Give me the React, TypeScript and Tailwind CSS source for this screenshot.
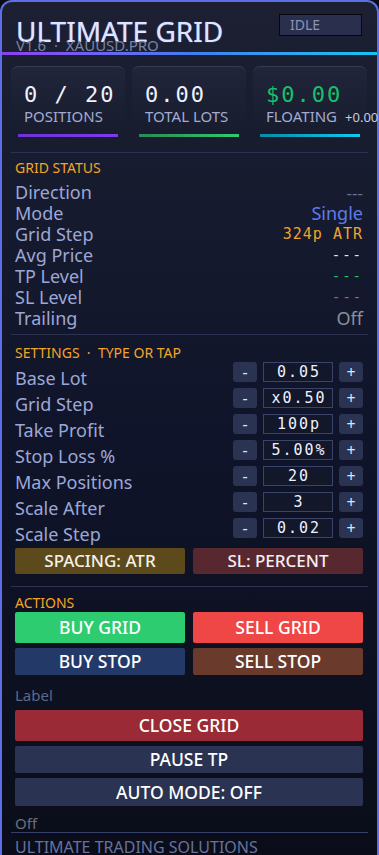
import React from "react";

const statusRows: { label: string; value: React.ReactNode }[] = [
  { label: "Direction", value: <span className="text-[17px] text-[#69718f]">---</span> },
  { label: "Mode", value: <span className="text-[#5f7ae9]">Single</span> },
  {
    label: "Grid Step",
    value: (
      <span className="font-['DejaVu_Sans_Mono',monospace] text-[15px] tracking-[1px] text-[#f0a328]">
        324p ATR
      </span>
    ),
  },
  {
    label: "Avg Price",
    value: <span className="font-['DejaVu_Sans_Mono',monospace] text-[14px] tracking-[2px] text-[#e4e8f5]">---</span>,
  },
  {
    label: "TP Level",
    value: <span className="font-['DejaVu_Sans_Mono',monospace] text-[14px] tracking-[2px] text-[#22c55e]">---</span>,
  },
  {
    label: "SL Level",
    value: <span className="font-['DejaVu_Sans_Mono',monospace] text-[14px] tracking-[2px] text-[#f04444]">---</span>,
  },
  { label: "Trailing", value: <span className="text-[#8b8f99]">Off</span> },
];

const settings = [
  { label: "Base Lot", value: "0.05" },
  { label: "Grid Step", value: "x0.50" },
  { label: "Take Profit", value: "100p" },
  { label: "Stop Loss %", value: "5.00%" },
  { label: "Max Positions", value: "20" },
  { label: "Scale After", value: "3" },
  { label: "Scale Step", value: "0.02" },
];

function StatCard({
  value,
  label,
  extra,
  valueClass,
  barClass,
}: {
  value: string;
  label: string;
  extra?: string;
  valueClass: string;
  barClass: string;
}) {
  return (
    <div className="flex h-[72px] w-[114px] flex-col rounded-[7px] border-t border-[#363c58] bg-gradient-to-b from-[#20253a] to-[#171b2d]">
      <div className="pl-[13px] pt-[17px]">
        <div className={`font-['DejaVu_Sans_Mono',monospace] text-[22px] leading-[22px] tracking-[2px] ${valueClass}`}>
          {value}
        </div>
        <div className="mt-[3px] whitespace-nowrap text-[15px] leading-[15px] text-[#a3acd0]">
          {label}
          {extra && <span className="ml-[8px] text-[13px] text-[#c6cbe3]">{extra}</span>}
        </div>
      </div>
      <div className={`mx-[7px] mb-[1px] mt-auto h-[3px] ${barClass}`} />
    </div>
  );
}

export default function App() {
  return (
    <div className="min-h-screen w-[379px] bg-[#0a0c16] font-['Noto_Sans',sans-serif]">
      <div className="w-[379px] rounded-[12px] border-2 border-[#5d6fe6] bg-gradient-to-b from-[#1c2032] via-[#10142a] to-[#0a0d18] pb-[20px]">
        {/* Header */}
        <div className="flex h-[50px] items-start justify-between overflow-hidden pl-[14px] pr-[15px] pt-[12px]">
          <div className="mt-[3px]">
            <div className="text-[28px] leading-[28px] text-[#dfe4ff] [text-shadow:0_0_1px_#8ea0ff]">ULTIMATE GRID</div>
            <div className="mt-[-7px] whitespace-pre text-[15px] leading-[15px] text-[#7a83a3]">V1.6  ·  XAUUSD.PRO</div>
          </div>
          <div className="h-[22px] w-[83px] border border-[#07080f] bg-[#2a2f4e] pl-[10px] text-[14px] leading-[20px] text-[#8c93b5]">
            IDLE
          </div>
        </div>
        <div className="h-[3px] bg-gradient-to-r from-[#8a3ff0] via-[#3f7cf0] to-[#10c4f0]" />

        {/* Stats */}
        <div className="mt-[11px] flex gap-[7px] pl-[9px]">
          <StatCard value="0 / 20" label="POSITIONS" valueClass="text-[#eef1ff]" barClass="bg-gradient-to-r from-[#6d32d8] to-[#7c3aed]" />
          <StatCard value="0.00" label="TOTAL LOTS" valueClass="text-[#eef1ff]" barClass="bg-gradient-to-r from-[#2a8a55] to-[#2ecc71]" />
          <StatCard
            value="$0.00"
            label="FLOATING"
            extra="+0.005"
            valueClass="text-[#19c06a]"
            barClass="bg-gradient-to-r from-[#0a8aa8] to-[#10c8f0]"
          />
        </div>

        <div className="mx-[9px] mt-[14px] h-px bg-[#2c3350]" />

        {/* Grid status */}
        <div className="pl-[13px] pr-[14px]">
          <div className="mt-[7px] text-[14px] leading-[16px] text-[#f5a524]">GRID STATUS</div>
          <div className="mt-[6px]">
            {statusRows.map((r) => (
              <div key={r.label} className="flex h-[21px] items-center justify-between text-[18px] leading-[21px]">
                <span className="text-[#9ca7d6]">{r.label}</span>
                {r.value}
              </div>
            ))}
          </div>
        </div>

        <div className="mx-[9px] mt-[5px] h-px bg-[#2c3350]" />

        {/* Settings */}
        <div className="pl-[13px] pr-[14px]">
          <div className="mt-[10px] whitespace-pre text-[14px] leading-[16px] text-[#f5a524]">SETTINGS  ·  TYPE OR TAP</div>
          <div className="mt-[1px]">
            {settings.map((s) => (
              <div key={s.label} className="flex h-[26px] items-start justify-between">
                <span className="pt-[6px] text-[18px] leading-[20px] text-[#9ca7d6]">{s.label}</span>
                <div className="flex gap-[6px]">
                  <div className="flex h-[20px] w-[24px] items-center justify-center rounded-[3px] bg-[#2b3352] text-[16px] leading-none text-[#dde3ff]">
                    -
                  </div>
                  <div className="flex h-[20px] w-[70px] items-center justify-center border border-[#3a4468] bg-[#121729] pl-[2px] font-['DejaVu_Sans_Mono',monospace] text-[15px] leading-none tracking-[2px] text-[#eef1ff]">
                    {s.value}
                  </div>
                  <div className="flex h-[20px] w-[24px] items-center justify-center rounded-[3px] bg-[#2b3352] text-[16px] leading-none text-[#dde3ff]">
                    +
                  </div>
                </div>
              </div>
            ))}
          </div>
          <div className="mt-[4px] grid grid-cols-2 gap-[8px]">
            <div className="flex h-[26px] items-center justify-center rounded-[2px] bg-[#5c4a1c] text-[17px] font-medium text-[#f4f1e8]">
              SPACING: ATR
            </div>
            <div className="flex h-[26px] items-center justify-center rounded-[2px] bg-[#582831] text-[17px] font-medium text-[#f6eef0]">
              SL: PERCENT
            </div>
          </div>
        </div>

        <div className="mx-[9px] mt-[12px] h-px bg-[#2c3350]" />

        {/* Actions */}
        <div className="pl-[13px] pr-[14px]">
          <div className="mt-[8px] text-[14px] leading-[16px] text-[#f5a524]">ACTIONS</div>
          <div className="mt-[1px] grid grid-cols-2 gap-[8px]">
            <div className="flex h-[31px] items-center justify-center rounded-[2px] bg-[#2ecc71] text-[17.5px] font-medium text-white">
              BUY GRID
            </div>
            <div className="flex h-[31px] items-center justify-center rounded-[2px] bg-[#ef4646] text-[17.5px] font-medium text-white">
              SELL GRID
            </div>
          </div>
          <div className="mt-[5px] grid grid-cols-2 gap-[8px]">
            <div className="flex h-[27px] items-center justify-center rounded-[2px] bg-[#233a68] text-[17.5px] font-medium text-white">
              BUY STOP
            </div>
            <div className="flex h-[27px] items-center justify-center rounded-[2px] bg-[#6a3a2c] text-[17.5px] font-medium text-white">
              SELL STOP
            </div>
          </div>
          <div className="mt-[10px] text-[15px] leading-[20px] text-[#5d6888]">Label</div>
          <div className="mt-[5px] flex h-[31px] items-center justify-center rounded-[2px] bg-[#9a2a36] text-[17.5px] font-medium text-white">
            CLOSE GRID
          </div>
          <div className="mt-[5px] flex h-[27px] items-center justify-center rounded-[2px] bg-[#2a3352] text-[17.5px] font-medium text-white">
            PAUSE TP
          </div>
          <div className="mt-[5px] flex h-[28px] items-center justify-center rounded-[2px] bg-[#2a3352] text-[17.5px] font-medium text-white">
            AUTO MODE: OFF
          </div>
          <div className="mt-[8px] text-[15px] leading-[18px] text-[#6b6f7c]">Off</div>
        </div>

        <div className="mx-[9px] h-px bg-[#34406a]" />
        <div className="mt-[4px] pl-[13px] text-[16px] leading-[20px] text-[#66739e]">ULTIMATE TRADING SOLUTIONS</div>
      </div>
    </div>
  );
}
